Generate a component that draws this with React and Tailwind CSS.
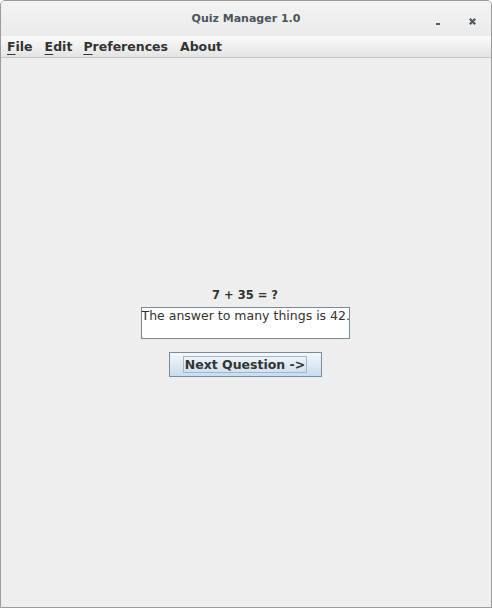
export default function App() {
  const font = { fontFamily: '"DejaVu Sans", sans-serif' };
  return (
    <div className="w-[492px] h-[608px] bg-white" style={font}>
      <div className="w-full h-full flex flex-col border border-[#9b9b9b] rounded-t-[5px] overflow-hidden bg-[#eeeeee]">
        <div className="h-[35px] flex items-center relative bg-gradient-to-b from-[#f3f3f3] to-[#ebebeb]">
          <div className="flex-1 text-center text-[11px] font-bold text-[#4a555c] pt-[2px]">Quiz Manager 1.0</div>
          <div className="absolute right-[15px] top-[16px] flex items-center gap-[29px]">
            <span className="w-[4px] h-[2px] bg-[#555d62] mt-[6px]"></span>
            <svg width="7" height="7" viewBox="0 0 7 7">
              <path d="M0.8 0.8 L6.2 6.2 M6.2 0.8 L0.8 6.2" stroke="#4f5a60" strokeWidth="2.2" />
            </svg>
          </div>
        </div>
        <div className="h-[22px] flex items-center gap-[12px] pl-[6px] pt-[1px] text-[12.5px] font-bold text-[#333333] bg-gradient-to-b from-[#fafafa] to-[#e4e4e4] border-b border-[#c6c6c6]">
          <span><span className="underline underline-offset-[3px]">F</span>ile</span>
          <span><span className="underline underline-offset-[3px]">E</span>dit</span>
          <span className="-ml-[1px]"><span className="underline underline-offset-[3px]">P</span>references</span>
          <span>About</span>
        </div>
        <div className="flex-1 flex flex-col items-center justify-center pr-[2px]">
          <div className="flex flex-col items-center">
            <div className="text-[11.5px] font-bold text-[#333333] leading-[14px] mb-[5px]">7 + 35 = ?</div>
            <div className="w-[209px] h-[32px] bg-white border border-[#7a8a99] text-[12.5px] leading-[15px] text-[#333333] whitespace-nowrap">
              The answer to many things is 42.
            </div>
            <div className="mt-[13px] w-[153px] h-[25px] border border-[#7a8a99] bg-gradient-to-b from-[#f4f8fc] to-[#c9dcee] flex items-center justify-center">
              <span className="border border-[#a3b8cc] px-[1px] text-[12.5px] font-bold text-[#333333] leading-[15px]">Next Question -&gt;</span>
            </div>
          </div>
        </div>
      </div>
    </div>
  );
}
